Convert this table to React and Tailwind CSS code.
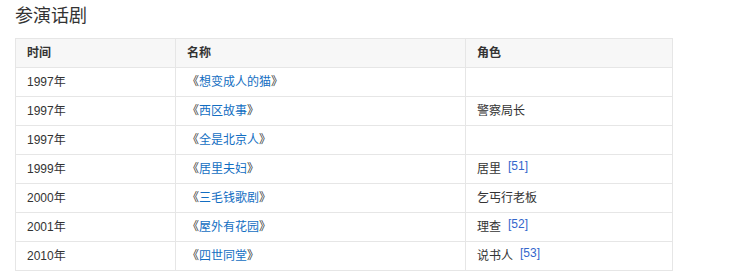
import React from "react";

const rows = [
  { year: "1997年", name: "想变成人的猫", role: "" },
  { year: "1997年", name: "西区故事", role: "警察局长" },
  { year: "1997年", name: "全是北京人", role: "" },
  { year: "1999年", name: "居里夫妇", role: "居里", ref: "[51]" },
  { year: "2000年", name: "三毛钱歌剧", role: "乞丐行老板" },
  { year: "2001年", name: "屋外有花园", role: "理查", ref: "[52]" },
  { year: "2010年", name: "四世同堂", role: "说书人", ref: "[53]" },
];

export default function App() {
  return (
    <div
      className="min-h-screen bg-white text-[#333] px-[15px] pt-[4px]"
      style={{ fontFamily: '"Liberation Sans", Arial, "Noto Sans CJK SC", sans-serif' }}
    >
      <h2 className="text-[18px] leading-[24px] font-normal text-[#333]">参演话剧</h2>
      <table className="mt-[10px] w-[657px] border-collapse text-[12px] table-fixed">
        <colgroup>
          <col className="w-[160px]" />
          <col className="w-[290px]" />
          <col className="w-[207px]" />
        </colgroup>
        <thead>
          <tr className="h-[29px] bg-[#f7f7f7]">
            <th className="border border-[#e6e6e6] px-[11px] text-left font-bold text-[#333]">时间</th>
            <th className="border border-[#e6e6e6] px-[11px] text-left font-bold text-[#333]">名称</th>
            <th className="border border-[#e6e6e6] px-[11px] text-left font-bold text-[#333]">角色</th>
          </tr>
        </thead>
        <tbody>
          {rows.map((r, i) => (
            <tr key={i} className="h-[29px]">
              <td className="border border-[#e6e6e6] px-[11px] text-[#333]">{r.year}</td>
              <td className="border border-[#e6e6e6] px-[11px] text-[#333]">
                《<a href="#" className="text-[#136ec2]">{r.name}</a>》
              </td>
              <td className="border border-[#e6e6e6] px-[11px] text-[#333]">
                {r.role}
                {r.ref && (
                  <sup className="ml-[7px] text-[12px] text-[#3366cc] relative -top-[3px]">{r.ref}</sup>
                )}
              </td>
            </tr>
          ))}
        </tbody>
      </table>
    </div>
  );
}
